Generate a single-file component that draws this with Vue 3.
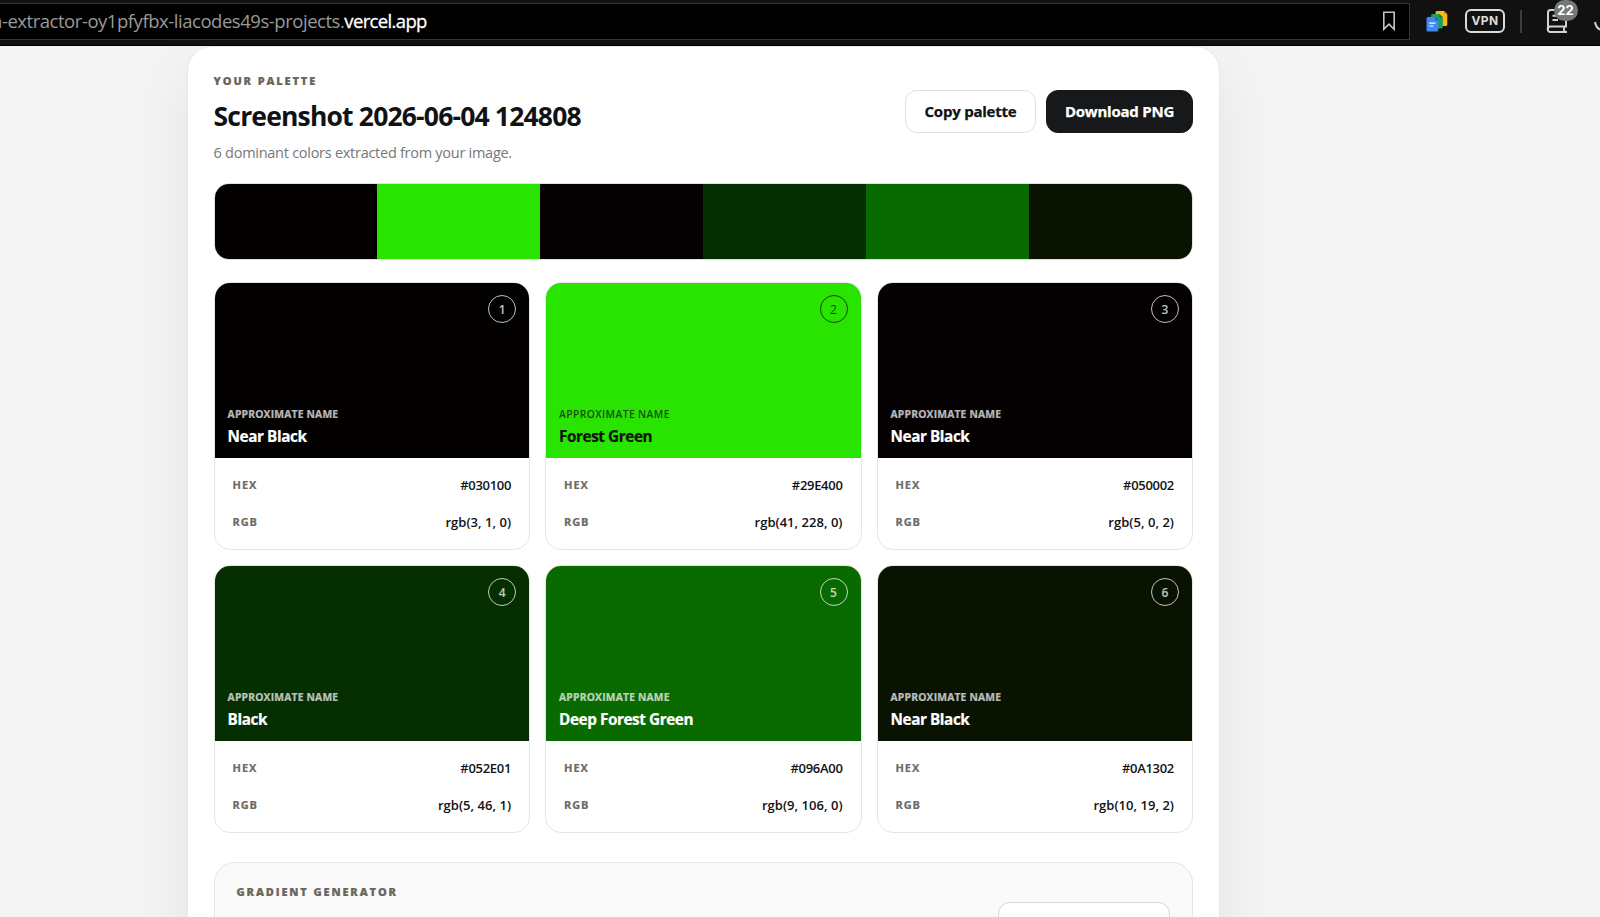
<template>
  <div class="page">
    <header class="browser-bar">
      <div class="address">
        <span class="url"><span class="url-sub">n-extractor-oy1pfyfbx-liacodes49s-projects.</span><span class="url-host">vercel.app</span></span>
        <svg class="bookmark" width="14" height="20" viewBox="0 0 14 20">
          <path d="M1.8 1.2H12.2V18.3L7 13.2L1.8 18.3Z" fill="none" stroke="#c4c4c4" stroke-width="1.6" />
        </svg>
      </div>
      <svg class="docs" width="22" height="22" viewBox="0 0 22 22">
        <path d="M11 1H18L21.3 4.3V14.5a1.5 1.5 0 0 1-1.5 1.5H11a1.5 1.5 0 0 1-1.5-1.5V2.5A1.5 1.5 0 0 1 11 1Z" fill="#fbb90b" />
        <path d="M18 1L21.3 4.3H18Z" fill="#ea8600" />
        <path d="M6.5 4H13.5L16.8 7.3V17a1.5 1.5 0 0 1-1.5 1.5H6.5A1.5 1.5 0 0 1 5 17V5.5A1.5 1.5 0 0 1 6.5 4Z" fill="#19a05b" />
        <path d="M13.5 4L16.8 7.3H13.5Z" fill="#0c7a40" />
        <path d="M2 7H9L12.3 10.3V20a1.5 1.5 0 0 1-1.5 1.5H2A1.5 1.5 0 0 1 .5 20V8.5A1.5 1.5 0 0 1 2 7Z" fill="#4285f4" />
        <path d="M9 7L12.3 10.3H9Z" fill="#1a5fd0" />
        <path d="M3.3 13.2H9.5M3.3 16H7.5" stroke="#fff" stroke-width="1.2" />
      </svg>
      <span class="vpn">VPN</span>
      <span class="divider"></span>
      <div class="reader">
        <svg width="22" height="26" viewBox="0 0 22 26">
          <g fill="none" stroke="#d2d2d2" stroke-width="2">
            <path d="M20 18.5V4.5A2.5 2.5 0 0 0 17.5 2H4.5A2.5 2.5 0 0 0 2 4.5V21.5" />
            <path d="M21 18.5H4.5a2.7 2.7 0 0 0 0 5.5H21M18.5 18.5q-1.5 2.7 0 5.5" />
            <path d="M6.5 7.8H12M6.5 12H12" />
          </g>
        </svg>
        <span class="count">22</span>
      </div>
      <svg class="download" width="24" height="26" viewBox="0 0 24 26">
        <path d="M2 14q1.5 8.5 10 8.5T22 14" fill="none" stroke="#d2d2d2" stroke-width="2" />
      </svg>
    </header>

    <main class="panel">
      <div class="panel-head">
        <div>
          <p class="eyebrow">YOUR PALETTE</p>
          <h1 class="title">Screenshot 2026-06-04 124808</h1>
          <p class="subtitle">{{ colors.length }} dominant colors extracted from your image.</p>
        </div>
        <div class="actions">
          <button class="btn btn-light">Copy palette</button>
          <button class="btn btn-dark">Download PNG</button>
        </div>
      </div>

      <div class="strip">
        <span v-for="color in colors" :key="color.hex" :style="{ background: color.hex }"></span>
      </div>

      <div class="grid">
        <article v-for="(color, index) in colors" :key="color.hex" class="card">
          <div class="swatch" :class="{ 'on-light': color.light }" :style="{ background: color.hex }">
            <span class="badge">{{ index + 1 }}</span>
            <span class="label">APPROXIMATE NAME</span>
            <strong class="name">{{ color.name }}</strong>
          </div>
          <div class="values">
            <div class="row">
              <span class="key">HEX</span>
              <span class="value value-hex">{{ color.hex }}</span>
            </div>
            <div class="row">
              <span class="key">RGB</span>
              <span class="value">rgb({{ color.rgb.join(', ') }})</span>
            </div>
          </div>
        </article>
      </div>

      <section class="generator">
        <p class="eyebrow">GRADIENT GENERATOR</p>
        <div class="select"></div>
      </section>
    </main>
  </div>
</template>

<script setup>
import { ref } from 'vue'

const colors = ref([
  { name: 'Near Black', hex: '#030100', rgb: [3, 1, 0] },
  { name: 'Forest Green', hex: '#29E400', rgb: [41, 228, 0], light: true },
  { name: 'Near Black', hex: '#050002', rgb: [5, 0, 2] },
  { name: 'Black', hex: '#052E01', rgb: [5, 46, 1] },
  { name: 'Deep Forest Green', hex: '#096A00', rgb: [9, 106, 0] },
  { name: 'Near Black', hex: '#0A1302', rgb: [10, 19, 2] }
])
</script>

<style>
body {
  margin: 0;
  overflow: hidden;
}
</style>

<style scoped>
.page {
  height: 917px;
  overflow: hidden;
  background: #f4f4f4;
  font-family: "Segoe UI", "Open Sans", "Noto Sans", sans-serif;
  color: #111214;
}
.page * {
  box-sizing: border-box;
}
p,
h1 {
  margin: 0;
}

/* browser chrome */
.browser-bar {
  position: relative;
  z-index: 1;
  display: flex;
  align-items: flex-start;
  width: 1620px;
  height: 46px;
  background: #111;
  border-bottom: 1px solid #000;
}
.address {
  display: flex;
  justify-content: space-between;
  width: 1410px;
  height: 37px;
  margin-top: 3px;
  padding-right: 13px;
  background: #000;
  border: 1px solid #353535;
  border-left: 0;
}
.url {
  margin-left: -9px;
  font-size: 18.5px;
  line-height: 34px;
  white-space: nowrap;
}
.url-sub {
  color: #999;
  letter-spacing: -0.46px;
}
.url-host {
  color: #fff;
  letter-spacing: -0.65px;
  -webkit-text-stroke: 0.3px #fff;
}
.bookmark {
  margin-top: 7px;
}
.docs {
  margin: 10px 0 0 16px;
}
.vpn {
  width: 40px;
  height: 24px;
  margin: 9px 0 0 17px;
  border: 2px solid #dcdcdc;
  border-radius: 6px;
  color: #dcdcdc;
  font: 700 12px/20px Inter, sans-serif;
  letter-spacing: 0.3px;
  text-align: center;
}
.divider {
  width: 2px;
  height: 23px;
  margin: 10px 0 0 15px;
  background: #3c3c3c;
}
.reader {
  position: relative;
  height: 26px;
  margin: 8px 0 0 24px;
}
.count {
  position: absolute;
  top: -8px;
  left: 7.5px;
  width: 24px;
  height: 21px;
  border-radius: 11px;
  background: #777;
  color: #fff;
  font: 700 13px/20px Inter, sans-serif;
  text-align: center;
}
.download {
  margin: 8px 0 0 25px;
}

/* palette panel */
.panel {
  width: 1033px;
  height: 1100px;
  margin: 0 0 0 187px;
  padding: 25.5px 26px 0 25.6px;
  background: #fff;
  border: 1px solid #e8e8e7;
  border-radius: 25px;
  box-shadow: 0 22px 60px rgba(20, 20, 10, 0.07);
}
.panel-head {
  display: flex;
  justify-content: space-between;
}
.eyebrow {
  font-size: 11px;
  font-weight: 800;
  line-height: 16px;
  letter-spacing: 1.87px;
  color: #68665f;
  -webkit-text-stroke: 0.2px #68665f;
}
.panel-head .eyebrow {
  padding-top: 0.5px;
}
.title {
  margin-top: 11px;
  font-size: 26.5px;
  font-weight: 700;
  line-height: 32px;
  letter-spacing: -0.83px;
}
.subtitle {
  margin-top: 9.5px;
  font-size: 14.5px;
  line-height: 22px;
  letter-spacing: -0.27px;
  color: #777;
}
.actions {
  display: flex;
  gap: 10px;
  margin-top: 17.5px;
}
.btn {
  height: 42.5px;
  padding: 0 0 1px;
  border: 1px solid #dededc;
  border-radius: 12px;
  font-family: inherit;
  font-size: 15px;
  font-weight: 700;
  letter-spacing: -0.22px;
  -webkit-text-stroke: 0.25px currentColor;
}
.btn-light {
  width: 131px;
  background: #fff;
  color: #111214;
}
.btn-dark {
  width: 147px;
  background: #17181a;
  border-color: #17181a;
  color: #fff;
}
.strip {
  display: grid;
  grid-template-columns: repeat(6, 1fr);
  height: 77px;
  margin-top: 19px;
  overflow: hidden;
  border: 1px solid #dededc;
  border-radius: 15px;
}
.grid {
  display: grid;
  grid-template-columns: repeat(3, 1fr);
  gap: 15px;
  margin-top: 22px;
}
.card {
  height: 268px;
  overflow: hidden;
  border: 1px solid #e5e5e4;
  border-radius: 16px;
}
.swatch {
  position: relative;
  display: flex;
  flex-direction: column;
  justify-content: flex-end;
  height: 175.4px;
  padding: 0 13px 12px;
  color: #fff;
}
.on-light {
  color: #111214;
}
.badge {
  position: absolute;
  top: 12.6px;
  right: 13px;
  width: 28px;
  height: 28px;
  border: 1px solid currentColor;
  border-radius: 50%;
  font-size: 12px;
  font-weight: 600;
  line-height: 27px;
  text-align: center;
  opacity: 0.75;
}
.on-light .badge {
  font-weight: 400;
}
.label {
  margin-bottom: 5px;
  font-size: 10.3px;
  font-weight: 700;
  line-height: 14px;
  letter-spacing: 0.2px;
  opacity: 0.72;
  -webkit-text-stroke: 0.2px currentColor;
}
.on-light .label {
  font-weight: 600;
  letter-spacing: 0.4px;
  -webkit-text-stroke: 0;
}
.name {
  font-size: 15.3px;
  line-height: 20px;
  letter-spacing: -0.43px;
  -webkit-text-stroke: 0.2px currentColor;
}
.values {
  display: grid;
  gap: 17.5px;
  padding: 16.9px 18px 0;
}
.row {
  display: flex;
  justify-content: space-between;
  line-height: 20px;
}
.key {
  font-size: 11px;
  font-weight: 700;
  letter-spacing: 0.9px;
  color: #6b6a66;
  -webkit-text-stroke: 0.2px #6b6a66;
}
.value {
  font-size: 13px;
  font-weight: 600;
  letter-spacing: 0.03px;
}
.value-hex {
  letter-spacing: -0.3px;
}

/* gradient section */
.generator {
  position: relative;
  height: 300px;
  margin-top: 29.2px;
  padding: 21px 22px;
  background: #fafafa;
  border: 1px solid #e5e5e4;
  border-radius: 21px;
}
.select {
  width: 172px;
  height: 44px;
  margin: 2px 0 0 auto;
  background: #fff;
  border: 1px solid #d8d8d6;
  border-radius: 12px;
}
</style>
